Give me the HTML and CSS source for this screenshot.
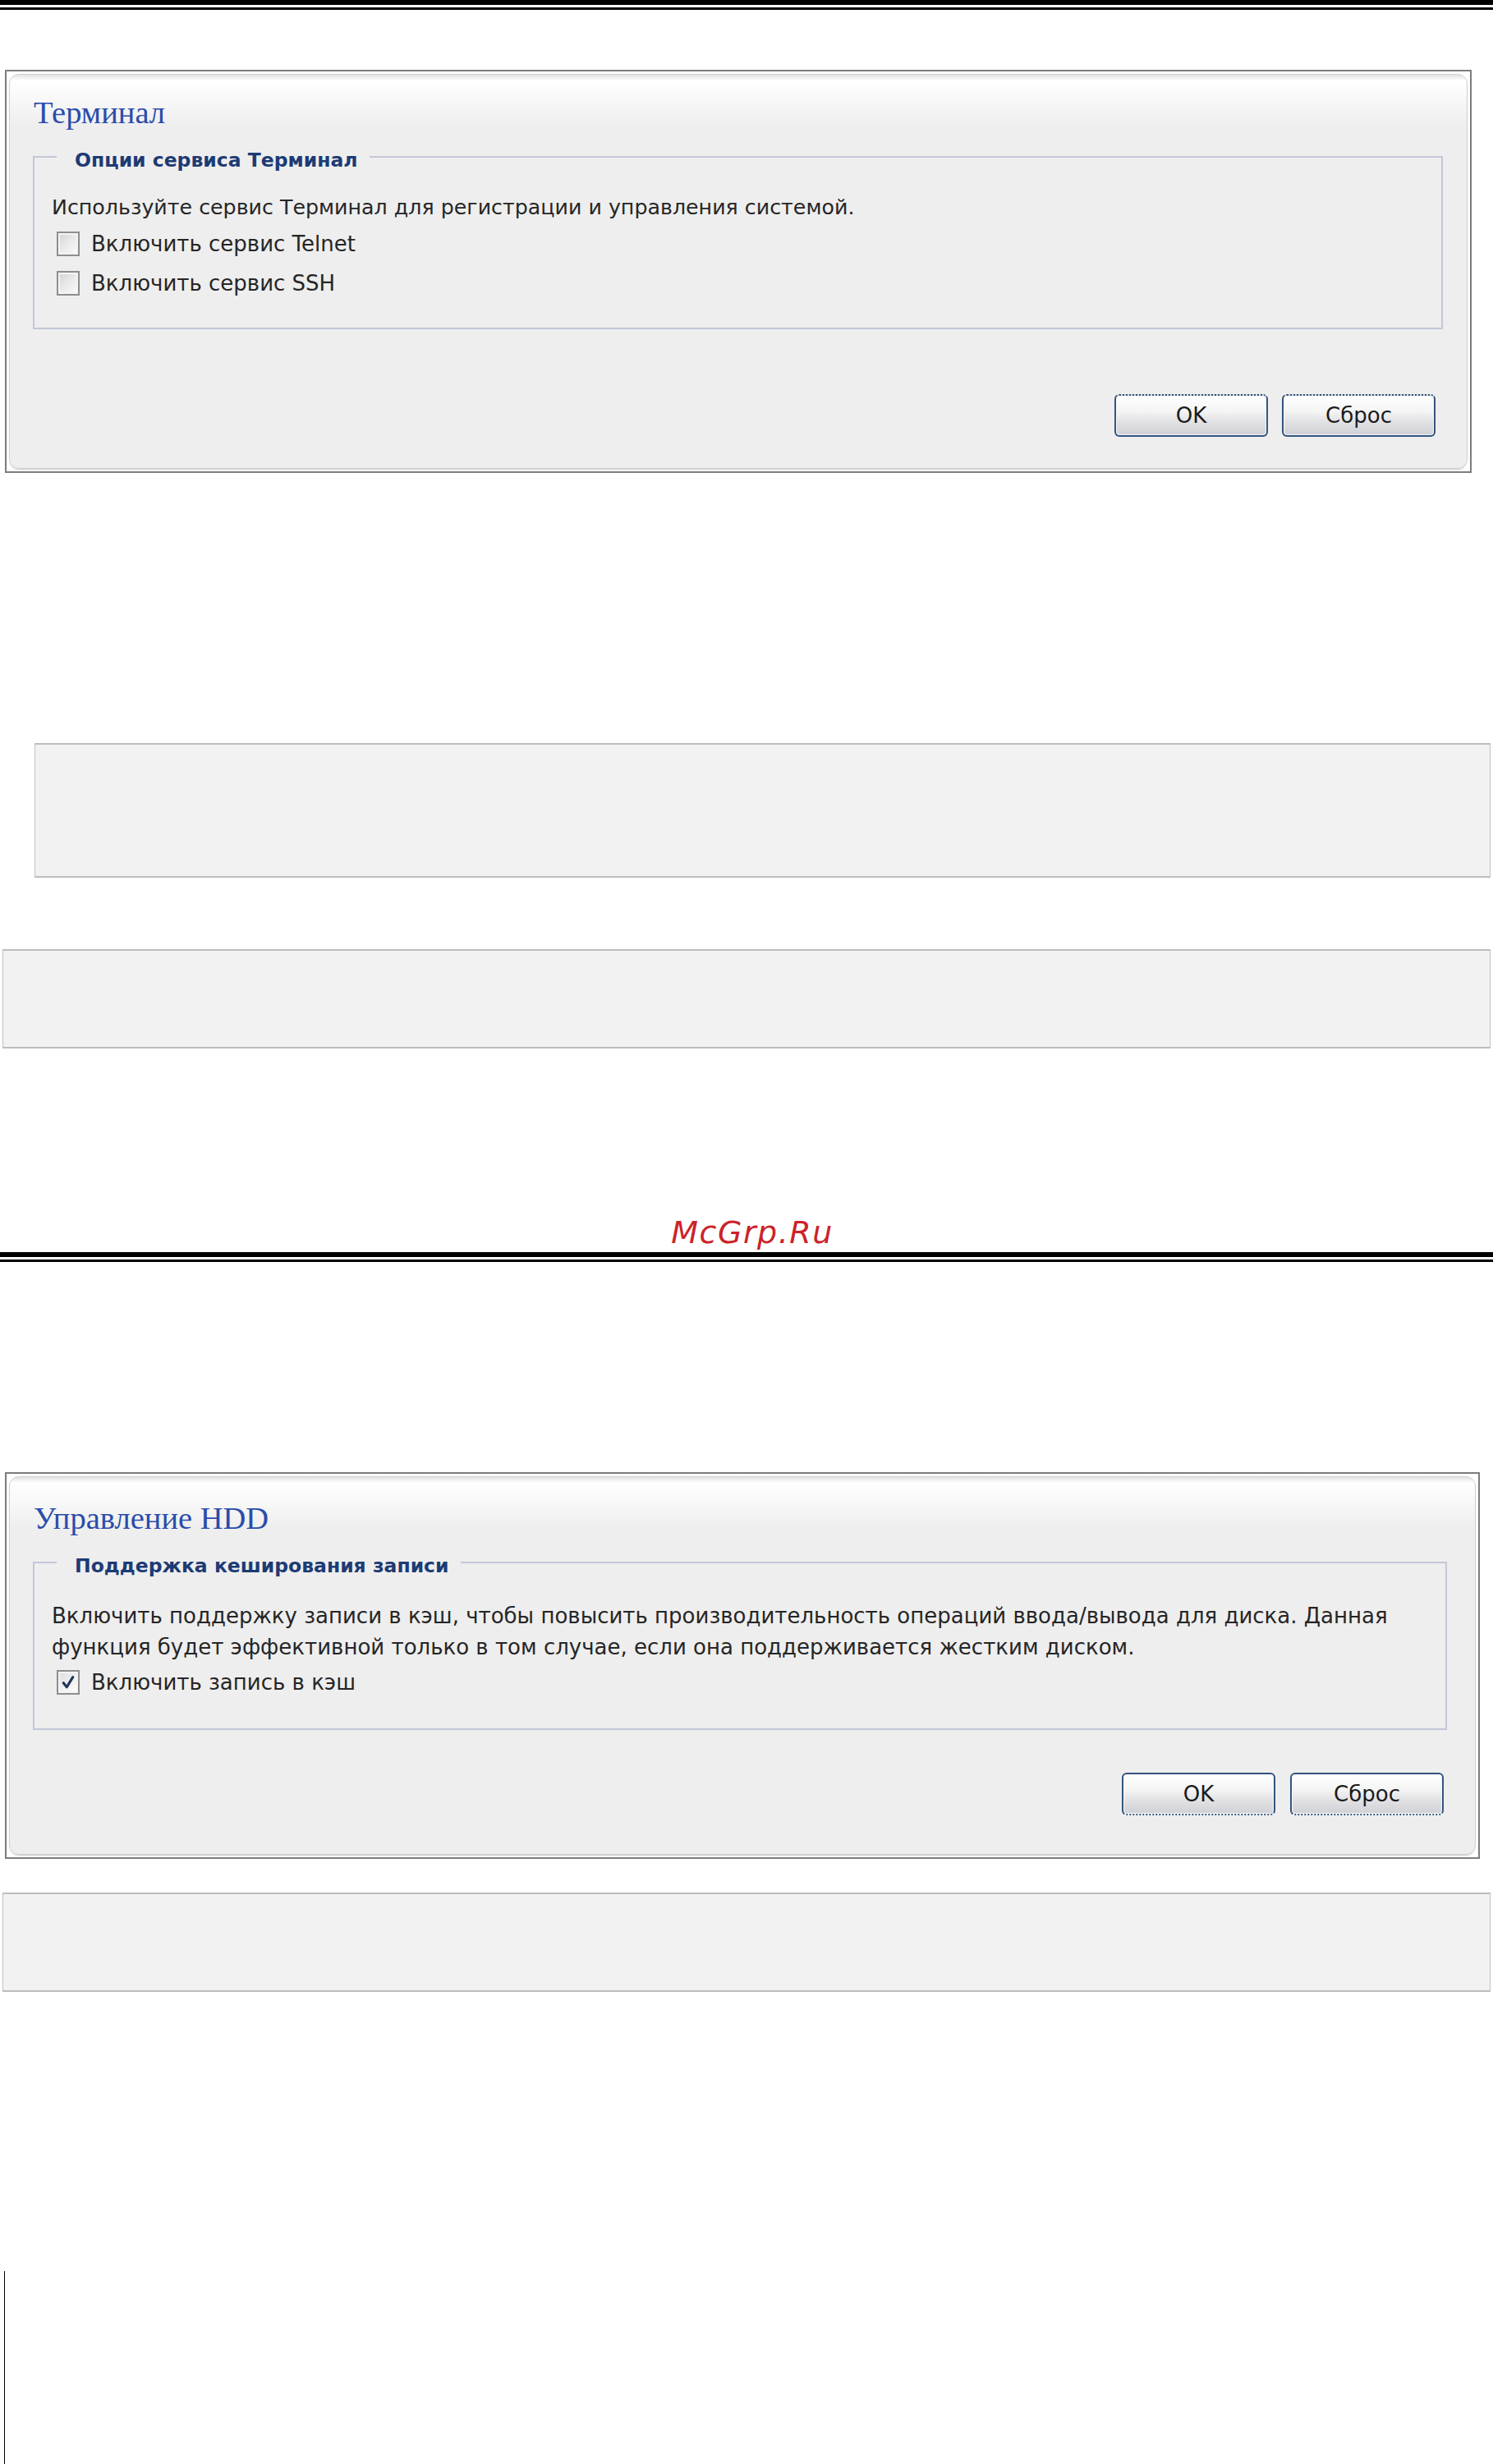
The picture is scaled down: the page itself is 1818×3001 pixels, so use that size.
FILE: index.html
```html
<!DOCTYPE html>
<html lang="ru">
<head>
<meta charset="utf-8">
<title>Терминал / Управление HDD</title>
<link rel="stylesheet" href="styles.css">
</head>
<body>
<div class="page">
  <div class="rule"></div>

  <section class="window win-terminal">
    <div class="panel">
      <h1 class="title">Терминал</h1>
      <fieldset class="group">
        <legend>Опции сервиса Терминал</legend>
        <div class="group-body">
          <p class="desc">Используйте сервис Терминал для регистрации и управления системой.</p>
          <label class="check"><span class="box"></span>Включить сервис Telnet</label>
          <label class="check"><span class="box"></span>Включить сервис SSH</label>
        </div>
      </fieldset>
      <div class="actions">
        <button class="btn">OK</button>
        <button class="btn">Сброс</button>
      </div>
    </div>
  </section>

  <div class="note note-1"></div>
  <div class="note note-2"></div>

  <div class="brand">McGrp.Ru</div>
  <div class="rule"></div>

  <section class="window win-hdd">
    <div class="panel">
      <h1 class="title">Управление HDD</h1>
      <fieldset class="group">
        <legend>Поддержка кеширования записи</legend>
        <div class="group-body">
          <p class="desc">Включить поддержку записи в кэш, чтобы повысить производительность операций ввода/вывода для диска. Данная<br>функция будет эффективной только в том случае, если она поддерживается жестким диском.</p>
          <label class="check"><span class="box checked"><svg viewBox="0 0 14 14" width="20" height="20"><path d="M3 7.5 L5.8 11 L11 2.5" fill="none" stroke="#23355e" stroke-width="2.2" stroke-linecap="round" stroke-linejoin="round"/></svg></span>Включить запись в кэш</label>
        </div>
      </fieldset>
      <div class="actions">
        <button class="btn">OK</button>
        <button class="btn">Сброс</button>
      </div>
    </div>
  </section>

  <div class="note note-3"></div>
  <div class="margin-line"></div>
</div>
</body>
</html>
```

FILE: styles.css
```css
* { box-sizing: border-box; }

html, body {
  margin: 0;
  padding: 0;
  background: #ffffff;
}

body {
  width: 1818px;
  height: 3001px;
  overflow: hidden;
  font-family: "DejaVu Sans", Verdana, sans-serif;
  color: #262626;
}

.page {
  display: flex;
  flex-direction: column;
  align-items: flex-start;
}

.rule {
  width: 1818px;
  height: 12px;
  border-top: 6px solid #000;
  border-bottom: 3px solid #000;
  flex: none;
}

/* ---------- dialog window ---------- */
.window {
  flex: none;
  display: flex;
  border: 2px solid #7c7c7c;
  background: #ffffff;
  padding: 3px;
}

.win-terminal {
  margin: 73px 0 0 6px;
  width: 1786px;
  height: 491px;
}

.win-hdd {
  margin: 256px 0 0 6px;
  width: 1796px;
  height: 471px;
}

.panel {
  flex: 1;
  display: flex;
  flex-direction: column;
  border: 1px solid #d0d0d0;
  border-radius: 12px;
  background: linear-gradient(to bottom, #e2e2e2 0, #ffffff 7px, #f8f8f8 30px, #eeeeee 62px, #eeeeee 100%);
  box-shadow: 0 2px 2px -1px #c4c4c4;
}

.title {
  margin: 24px 0 0 29px;
  font-family: "Liberation Serif", "Times New Roman", serif;
  font-weight: normal;
  font-size: 38.5px;
  line-height: 44px;
  color: #2b4caa;
}

.win-hdd .title { margin-top: 28px; }

.group {
  margin: 14px 29px 0 28px;
  padding: 0;
  min-width: 0;
  border: 2px solid #c2c7d8;
}

.win-hdd .group { margin-right: 34px; }

.group legend {
  margin-left: 27px;
  padding: 8px 14px 0 22px;
  font-family: "DejaVu Sans", Verdana, sans-serif;
  font-weight: bold;
  font-size: 23.5px;
  line-height: 28px;
  color: #1d3b74;
}

.group-body {
  padding: 29px 20px 30px 21px;
}

.win-hdd .group-body { padding-top: 28px; padding-bottom: 32px; }

.desc {
  margin: 0 0 5px;
  font-size: 25.3px;
  line-height: 30px;
  white-space: nowrap;
}

.win-hdd .desc {
  margin-bottom: 0;
  font-size: 26px;
  line-height: 38px;
}

.check {
  display: flex;
  align-items: center;
  gap: 14px;
  height: 48px;
  margin-left: 6px;
  font-size: 26px;
}

.box {
  flex: none;
  width: 28px;
  height: 30px;
  border: 2px solid #8e8e8e;
  background: linear-gradient(135deg, #d2d2d2 0%, #e8e8e8 45%, #fbfbfb 100%);
  box-shadow: inset 0 0 0 2px #f4f4f4;
  display: flex;
  align-items: center;
  justify-content: center;
}

.box.checked {
  background: linear-gradient(135deg, #dcdcdc 0%, #efefef 50%, #ffffff 100%);
}

.actions {
  display: flex;
  justify-content: flex-end;
  gap: 17px;
  margin: 79px 38px 0 0;
}

.win-hdd .actions { margin-top: 52px; gap: 18px; }

.btn {
  width: 187px;
  height: 52px;
  padding: 0;
  border: 2px solid #33557f;
  border-radius: 6px;
  background: linear-gradient(to bottom, #ffffff 0%, #f4f4f4 40%, #e4e4e6 62%, #cfd0d6 100%);
  box-shadow: inset 0 0 0 1px #f7f7f7;
  font-family: "DejaVu Sans", Verdana, sans-serif;
  font-size: 26px;
  color: #1b1b1b;
}

.win-terminal .btn { border-top-style: dotted; }
.win-hdd .btn { border-bottom-style: dotted; }

/* ---------- grey note boxes ---------- */
.note {
  flex: none;
  background: #f2f2f2;
  border-top: 2px solid #bdbdbd;
  border-bottom: 2px solid #bdbdbd;
  border-left: 1px solid #c2c2c2;
  border-right: 1px solid #c2c2c2;
}

.note-1 {
  margin: 329px 0 0 42px;
  width: 1773px;
  height: 164px;
}

.note-2 {
  margin: 87px 0 0 3px;
  width: 1812px;
  height: 121px;
}

.note-3 {
  margin: 41px 0 0 3px;
  width: 1812px;
  height: 121px;
}

/* ---------- watermark ---------- */
.brand {
  flex: none;
  width: 1818px;
  margin-top: 200px;
  height: 48px;
  padding-left: 14px;
  text-align: center;
  font-family: "DejaVu Sans", Verdana, sans-serif;
  font-style: italic;
  font-size: 38px;
  line-height: 48px;
  letter-spacing: 1.5px;
  color: #cc2229;
}

.margin-line {
  flex: none;
  margin: 340px 0 0 5px;
  width: 1px;
  height: 235px;
  background: #000;
}
```
